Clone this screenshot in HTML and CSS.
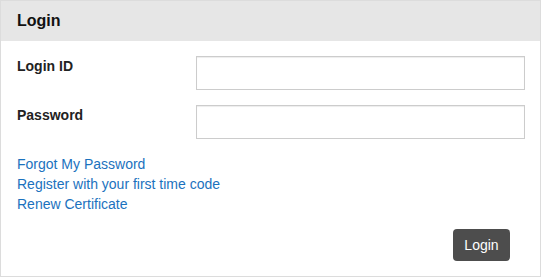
FILE: index.html
```html
<!DOCTYPE html>
<html>
<head>
<meta charset="utf-8">
<link rel="stylesheet" href="styles.css">
</head>
<body>
<div class="card">
  <div class="card-header">Login</div>
  <div class="card-body">
    <div class="row">
      <label class="label" for="loginid">Login ID</label>
      <input class="input" id="loginid" type="text">
    </div>
    <div class="row">
      <label class="label" for="pw">Password</label>
      <input class="input" id="pw" type="password">
    </div>
    <div class="links">
      <a href="#">Forgot My Password</a>
      <a href="#">Register with your first time code</a>
      <a href="#">Renew Certificate</a>
    </div>
    <div class="actions">
      <button class="btn" type="button">Login</button>
    </div>
  </div>
</div>
</body>
</html>
```

FILE: styles.css
```css
html, body {
  margin: 0;
  padding: 0;
  background: #fff;
}
body {
  font-family: "Liberation Sans", Arial, sans-serif;
  font-size: 14px;
  color: #222;
}
.card {
  width: 539px;
  height: 275px;
  border: 1px solid #dcdcdc;
  display: flex;
  flex-direction: column;
}
.card-header {
  height: 40px;
  line-height: 40px;
  background: #e6e6e6;
  padding-left: 16px;
  font-size: 16px;
  font-weight: bold;
  color: #111;
}
.card-body {
  padding: 15px 15px 15px 16px;
  display: flex;
  flex-direction: column;
  flex: 1;
}
.row {
  display: flex;
  align-items: flex-start;
  margin-bottom: 15px;
}
.label {
  width: 179px;
  font-weight: bold;
  color: #222;
  line-height: 16px;
  padding-top: 2px;
}
.input {
  box-sizing: border-box;
  width: 329px;
  height: 34px;
  margin: 0;
  border: 1px solid #cccccc;
  border-radius: 0;
  box-shadow: inset 0 1px 1px rgba(0, 0, 0, 0.075);
  background: #fff;
  padding: 4px 8px;
  font-family: inherit;
  font-size: 14px;
}
.links {
  display: flex;
  flex-direction: column;
}
.links a {
  color: #1b72be;
  text-decoration: none;
  line-height: 20px;
  align-self: flex-start;
}
.actions {
  display: flex;
  justify-content: flex-end;
  margin-top: auto;
  padding-right: 15px;
}
.btn {
  box-sizing: border-box;
  width: 57px;
  height: 32px;
  padding: 0;
  border: none;
  border-radius: 4px;
  background: #4d4d4d;
  color: #fff;
  font-family: inherit;
  font-size: 14px;
}
```
